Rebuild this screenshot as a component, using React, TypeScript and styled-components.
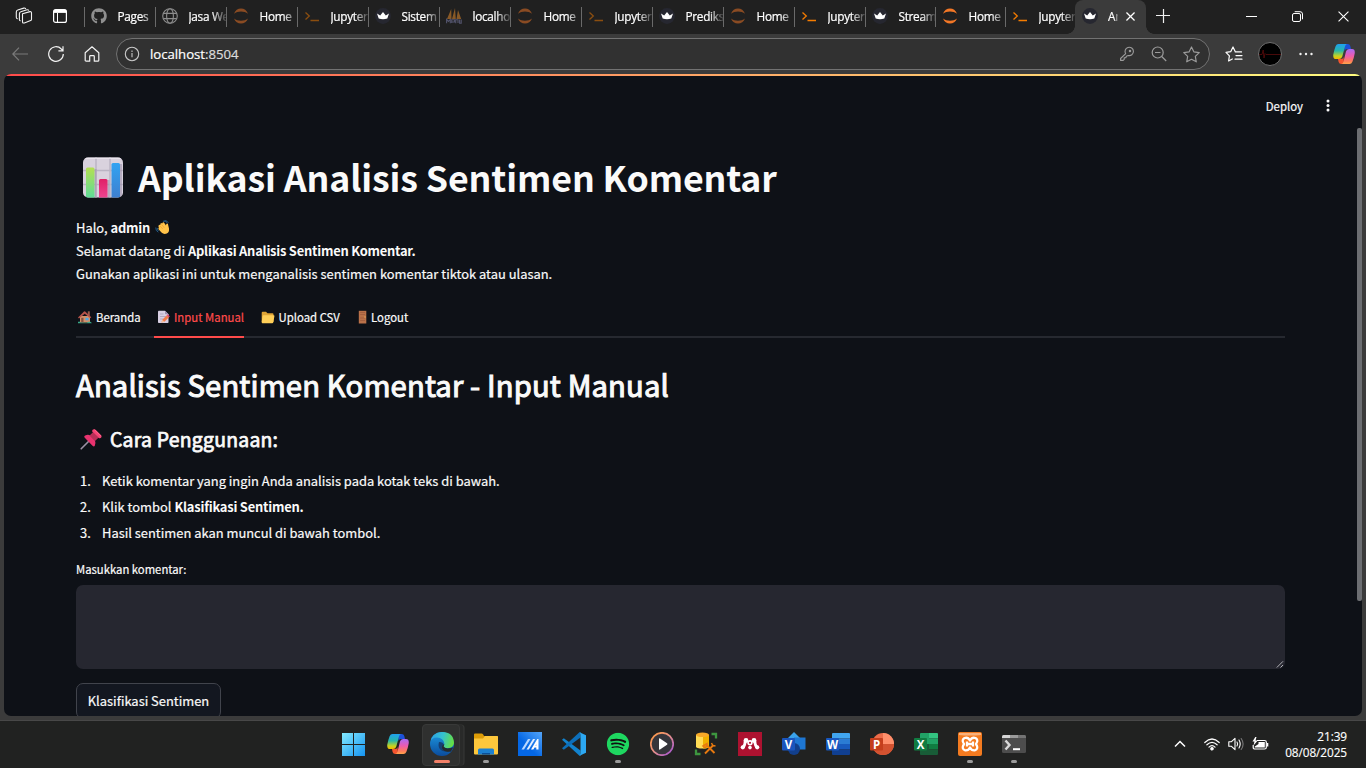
import React from "react";
import styled, { createGlobalStyle } from "styled-components";
import { FaGithub, FaSpotify } from "react-icons/fa";

const ui = `"Open Sans", "Noto Sans", sans-serif`;
const source = `"Noto Sans CJK SC", "Noto Sans", sans-serif`;

const GlobalStyle = createGlobalStyle`
  * { box-sizing: border-box; }
  body { margin: 0; background: #3b3b3b; overflow: hidden; }
  svg { display: block; flex: none; }
`;

/* ---------- browser chrome ---------- */

const Screen = styled.div`
  width: 1366px;
  height: 768px;
  display: flex;
  flex-direction: column;
  overflow: hidden;
  background: #3b3b3b;
  font-family: ${ui};
  color: #fff;
`;

const TabStrip = styled.div`
  height: 34px;
  flex: none;
  display: flex;
  background: #202020;
`;

const StripTools = styled.div`
  width: 84px;
  display: flex;
  align-items: center;
  padding: 0 0 2px 15px;
  gap: 20px;
`;

const Tab = styled.div<{ $w: number }>`
  width: ${(p) => p.$w}px;
  height: 20px;
  margin-top: 7px;
  border-left: 1px solid #6a6a6a;
  display: flex;
  align-items: center;
  padding: 0 0 2px 6px;
  gap: 10.5px;
`;

const TabIcon = styled.span<{ $dim?: boolean }>`
  flex: none;
  width: 16px;
  height: 16px;
  opacity: ${(p) => (p.$dim ? 0.5 : 1)};
`;

const TabTitle = styled.span`
  flex: 1;
  min-width: 0;
  overflow: hidden;
  white-space: nowrap;
  font-size: 11.8px;
  line-height: 16px;
  letter-spacing: -0.3px;
  color: #fff;
  -webkit-text-stroke: 0.2px #fff;
  mask-image: linear-gradient(to right, #000 calc(100% - 14px), rgba(0, 0, 0, 0.15));
`;

const ActiveTab = styled.div`
  width: 71px;
  height: 34px;
  position: relative;
  background: #3b3b3b;
  border-radius: 8px 8px 0 0;
  display: flex;
  align-items: center;
  padding: 0 11px 2px 7px;

  &::before,
  &::after {
    content: "";
    position: absolute;
    bottom: 0;
    width: 8px;
    height: 8px;
  }
  &::before {
    left: -8px;
    background: radial-gradient(circle at 0 0, transparent 7.5px, #3b3b3b 8px);
  }
  &::after {
    right: -8px;
    background: radial-gradient(circle at 100% 0, transparent 7.5px, #3b3b3b 8px);
  }
`;

const ActiveTitle = styled(TabTitle)`
  flex: none;
  width: 10px;
  margin: 0 8px 0 10px;
  mask-image: linear-gradient(to right, #000 60%, rgba(0, 0, 0, 0.2));
`;

const NewTab = styled.div`
  padding: 9px 0 0 10px;
`;

const WindowButtons = styled.div`
  margin-left: auto;
  display: flex;
  align-items: center;
  gap: 35px;
  padding: 0 17px 1px 0;
`;

const Toolbar = styled.div`
  height: 40px;
  flex: none;
  display: flex;
  align-items: center;
  padding: 0 11px 0 12px;
`;

const NavButtons = styled.div`
  display: flex;
  align-items: center;
  width: 104px;
  gap: 20px;
`;

const AddressBar = styled.div`
  width: 1094px;
  height: 32px;
  border: 1px solid #727272;
  border-radius: 16px;
  background: #313131;
  display: flex;
  align-items: center;
  padding: 0 9px 0 7px;
`;

const Url = styled.span`
  flex: 1;
  margin-left: 10px;
  font-size: 13.2px;
  line-height: 18px;
  letter-spacing: -0.03px;
  color: #fff;
  -webkit-text-stroke: 0.2px currentColor;

  span { color: #dcdcdc; }
`;

const AddressActions = styled.div`
  display: flex;
  align-items: center;
  gap: 16px;
`;

const ToolbarActions = styled.div`
  flex: 1;
  display: flex;
  align-items: center;
  justify-content: flex-end;
`;

const Avatar = styled.div`
  width: 24px;
  height: 24px;
  margin: 0 17px 0 15px;
  border-radius: 50%;
  border: 1px solid #707070;
  background: #000;
  display: flex;
  align-items: center;
  overflow: hidden;
`;

const CopilotSlot = styled.span`
  margin-left: 20px;
`;

/* ---------- page ---------- */

const Page = styled.div`
  position: relative;
  width: 1358px;
  height: 642px;
  flex: none;
  margin: 0 4px;
  border-radius: 7px;
  overflow: hidden;
  background: #0e1117;
  color: #fafafa;
  font-family: ${source};
  -webkit-text-stroke: 0.2px currentColor;
`;

const Rainbow = styled.div`
  height: 2px;
  background: linear-gradient(to right, #ff4b4b, #fffd80);
`;

const Header = styled.div`
  height: 76px;
  display: flex;
  justify-content: flex-end;
  align-items: flex-start;
  padding: 20px 32px 0 0;
  gap: 23px;
  font-size: 11.4px;
  line-height: 20px;
`;

const KebabSlot = styled.span`
  padding: 3px 0;
`;

const Content = styled.div`
  width: 1209px;
  margin-left: 72px;
`;

const Title = styled.h1`
  margin: 0;
  height: 48px;
  display: flex;
  align-items: center;
  gap: 15px;
  padding: 2px 0 0 6px;
  font-size: 35.7px;
  line-height: 48px;
  font-weight: 700;
  letter-spacing: -0.12px;
  white-space: nowrap;
  -webkit-text-stroke: 0;
`;

const Intro = styled.div`
  margin-top: 16px;
  font-size: 12.92px;
  line-height: 23px;
`;

const Strong = styled.b`
  font-weight: 700;
  letter-spacing: -0.22px;
  -webkit-text-stroke: 0;
`;

const Line = styled.div`
  display: flex;
  align-items: center;
  white-space: pre;
  height: 23px;
`;

const WaveSlot = styled.span`
  margin-left: 5px;
`;

const TabList = styled.div`
  margin-top: 14px;
  height: 39px;
  display: flex;
  gap: 14px;
  border-bottom: 2px solid #262930;
`;

const PageTab = styled.div<{ $active?: boolean; $w: number; $inset?: number }>`
  height: 39px;
  width: ${(p) => p.$w}px;
  display: flex;
  align-items: center;
  gap: 4px;
  padding: 0 0 1px ${(p) => p.$inset ?? 2}px;
  border-bottom: 2px solid ${(p) => (p.$active ? "#ff4b4b" : "transparent")};
  color: ${(p) => (p.$active ? "#ff4b4b" : "#fafafa")};
  font-size: 11.36px;
  white-space: nowrap;
`;

const Subtitle = styled.h2`
  margin: 26px 0 0;
  font-size: 29.2px;
  line-height: 40px;
  font-weight: 400;
  letter-spacing: 0.15px;
  -webkit-text-stroke: 1.05px currentColor;
`;

const Section = styled.h3`
  margin: 20px 0 0;
  padding: 0 0 0 4px;
  height: 29px;
  display: flex;
  align-items: center;
  gap: 7px;
  font-size: 19.4px;
  line-height: 29px;
  font-weight: 400;
  letter-spacing: 0.24px;
  -webkit-text-stroke: 0.75px currentColor;
`;

const PinSlot = styled.span`
  padding-top: 1px;
`;

const Steps = styled.ol`
  margin: 15px 0 0;
  padding: 0;
  list-style: none;
  font-size: 12.92px;
  line-height: 26px;
`;

const Step = styled.li`
  display: flex;
  height: 26px;
  white-space: pre;
  padding-left: 4px;
`;

const StepNumber = styled.span`
  width: 22px;
`;

const Label = styled.div`
  margin-top: 13px;
  height: 26px;
  font-size: 11.3px;
  line-height: 20px;
`;

const TextBox = styled.div`
  height: 84px;
  border-radius: 7px;
  background: #262730;
  display: flex;
  justify-content: flex-end;
  align-items: flex-end;
`;

const Button = styled.div`
  margin-top: 14px;
  width: 145px;
  height: 36px;
  border: 1px solid #41444c;
  border-radius: 7px;
  background: #131720;
  text-align: center;
  font-size: 12.92px;
  line-height: 34px;
`;

const ScrollThumb = styled.div`
  position: absolute;
  right: 0;
  top: 54px;
  width: 5px;
  height: 473px;
  border-radius: 2px;
  background: #6c6e72;
`;

/* ---------- taskbar ---------- */

const Taskbar = styled.div`
  height: 48px;
  margin-top: 4px;
  flex: none;
  border-top: 1px solid #484848;
  background: #212221;
  display: flex;
  align-items: center;
  padding-left: 332px;
`;

const TaskCell = styled.div<{ $active?: boolean }>`
  position: relative;
  width: 44px;
  height: 47px;
  display: flex;
  align-items: center;
  justify-content: center;
  padding-bottom: 1px;

  &::before {
    content: "";
    display: ${(p) => (p.$active ? "block" : "none")};
    position: absolute;
    left: 2px;
    top: 3px;
    width: 36px;
    height: 40px;
    border-radius: 4px;
    background: #2f302f;
    border: 1px solid #383938;
    box-shadow: 4px 0 0 -0.5px #292a29, 5px 0 0 -0.5px #383938;
  }
  svg { position: relative; }
`;

const Running = styled.span<{ $active?: boolean }>`
  position: absolute;
  bottom: 5px;
  left: ${(p) => (p.$active ? 14 : 19)}px;
  width: ${(p) => (p.$active ? 16 : 6)}px;
  height: 3px;
  border-radius: 2px;
  background: ${(p) => (p.$active ? "#f28068" : "#9b9b9b")};
`;

const Tray = styled.div`
  margin-left: auto;
  display: flex;
  align-items: center;
  padding: 0 19px 1px 0;
`;

const TraySlot = styled.span<{ $w: number }>`
  width: ${(p) => p.$w}px;
  display: flex;
  justify-content: center;
`;

const Clock = styled.div`
  width: 66px;
  margin-left: 1px;
  padding-bottom: 1px;
  text-align: right;
  font-size: 11.8px;
  line-height: 16px;
  letter-spacing: -0.08px;
  -webkit-text-stroke: 0.15px #fff;
`;

/* ---------- icons ---------- */

const WorkspacesIcon = () => (
  <svg width="18" height="18" viewBox="0 0 18 18" fill="none" stroke="#f2f2f2" strokeWidth="1.1" strokeLinejoin="round" strokeLinecap="round">
    <path d="M7.5 6.8 15 4.6Q16.5 4.4 16.5 6V12.3Q16.5 13.3 15.6 13.6L9.4 15.9Q7.5 16.5 7.5 14.8Z" />
    <path d="M5.2 13.8Q4.4 13.6 4.4 12.4V6.8Q4.4 5.2 5.8 4.8L12 2.8Q13 2.6 13.6 3.2" />
    <path d="M2.3 11.8Q1.3 11.4 1.3 10.2V5Q1.3 3.4 2.7 3L8.8 1.1Q10 .8 10.6 1.6" />
  </svg>
);

const VerticalTabsIcon = () => (
  <svg width="14" height="14" viewBox="0 0 14 14" fill="none" stroke="#fff">
    <rect x=".6" y=".6" width="12.8" height="12.8" rx="2" strokeWidth="1.2" />
    <path d="M1 2.4H13" strokeWidth="3" />
    <path d="M4.5 4V13" />
  </svg>
);

const GlobeIcon = () => (
  <svg width="16" height="16" viewBox="0 0 16 16" fill="none" stroke="#8c8c8c" strokeWidth="1.1">
    <circle cx="8" cy="8" r="7.3" />
    <ellipse cx="8" cy="8" rx="3.4" ry="7.3" />
    <path d="M1.3 5.4H14.7M1.3 10.6H14.7" />
  </svg>
);

const JupyterIcon = () => (
  <svg width="16" height="16" viewBox="0 0 16 16" fill="#f37726">
    <path d="M1 5.7C2.2 2.4 4.9.6 8 .6s5.8 1.8 7 5.1C13 4.200 10.800 3.500 8 3.500S3 4.200 1 5.700Z" />
    <path d="M1 10.500C2.200 13.800 4.900 15.600 8 15.600s5.800-1.800 7-5.100C13 12 10.800 12.700 8 12.700S3 12 1 10.500Z" />
  </svg>
);

const PromptIcon = () => (
  <svg width="16" height="16" viewBox="0 0 16 16" fill="none" stroke="#f57c00" strokeWidth="1.3">
    <path d="M1.500 4.500 5.300 8 1.500 11.500M6.500 12.500H15" />
  </svg>
);

const CrownIcon = () => (
  <svg width="16" height="16" viewBox="0 0 16 16">
    <circle cx="8" cy="8" r="7.900" fill="#262730" />
    <path d="M2 5.600 5.200 7.600 8 4 10.800 7.600 14 5.600 12.300 10.600Q8 11.800 3.700 10.600Z" fill="#fff" />
  </svg>
);

const SailIcon = () => (
  <svg width="16" height="16" viewBox="0 0 16 16">
    <path d="M5.200 1 1 11H5.500Z M9 0 6 11H9.800Z M12 2 10.500 11H15.200Z" fill="#f2932c" />
    <path d="M.6 15.200V11.500L2.500 13.500 4.300 11.500V15.200M5.700 15V11.800H8.500V14H5.700M9.700 15.200V11.800H12V15M13.600 11.500V15.200H15.200V11.500" fill="none" stroke="#8587b8" strokeWidth="1.100" />
  </svg>
);

const CloseIcon = ({ size, w = 1.2 }: { size: number; w?: number }) => (
  <svg width={size} height={size} viewBox="0 0 10 10" stroke="#fff" strokeWidth={w}>
    <path d="M.5.5 9.500 9.500M9.500.5.5 9.500" />
  </svg>
);

const PlusIcon = () => (
  <svg width="14" height="14" viewBox="0 0 14 14" stroke="#f0f0f0" strokeWidth="1.200">
    <path d="M7.500 0V14M0 6.500H14" />
  </svg>
);

const BackIcon = () => (
  <svg width="16" height="14" viewBox="0 0 16 14" fill="none" stroke="#7a7a7a" strokeWidth="1.200">
    <path d="M7 .7.8 7 7 13.300M1 7H16" />
  </svg>
);

const ReloadIcon = () => (
  <svg width="16" height="16" viewBox="0 0 16 16" fill="none" stroke="#f2f2f2" strokeWidth="1.200">
    <path d="M15.300 8A7.300 7.300 0 1 1 13.300 3L15 4.700M15 .3V4.900H10.400" />
  </svg>
);

const HomeIcon = () => (
  <svg width="16" height="16" viewBox="0 0 16 16" fill="none" stroke="#f2f2f2" strokeWidth="1.200" strokeLinejoin="round">
    <path d="M1.200 6.700 8 .8 14.800 6.700V14.200Q14.800 15.200 13.800 15.200H10.300V10.500Q10.300 9.700 9.500 9.700H6.500Q5.700 9.700 5.700 10.500V15.200H2.200Q1.200 15.200 1.200 14.200Z" />
  </svg>
);

const InfoIcon = () => (
  <svg width="16" height="16" viewBox="0 0 16 16" fill="none" stroke="#c8c8c8" strokeWidth="1.100">
    <circle cx="8" cy="8" r="6.700" />
    <path d="M8 7V11.300M8 4.600V5.900" />
  </svg>
);

const KeyIcon = () => (
  <svg width="16" height="16" viewBox="0 0 16 16" fill="none" stroke="#9c9c9c" strokeWidth="1.100" strokeLinejoin="round">
    <path d="M6.700 7.700A4.200 4.200 0 1 1 9.200 9.500L7.400 10.200 6.800 11.800H5.200V13.400L4.200 14.400H1.600V12.500Z" />
    <circle cx="11" cy="5" r=".7" fill="#9c9c9c" />
  </svg>
);

const ZoomOutIcon = () => (
  <svg width="16" height="16" viewBox="0 0 16 16" fill="none" stroke="#9c9c9c" strokeWidth="1.200">
    <circle cx="6.700" cy="6.500" r="5.500" />
    <path d="M10.700 10.500 15.200 15M4 6.500H9.500" />
  </svg>
);

const StarIcon = () => (
  <svg width="17" height="17" viewBox="0 0 16 16" fill="none" stroke="#9c9c9c" strokeWidth="1.100" strokeLinejoin="round">
    <path d="M8 .9 10.200 5.500 15.300 6.200 11.600 9.800 12.500 14.900 8 12.500 3.500 14.900 4.400 9.800.7 6.200 5.800 5.500Z" />
  </svg>
);

const FavoritesIcon = () => (
  <svg width="18" height="16" viewBox="0 0 18 16" fill="none" stroke="#fff" strokeWidth="1.200" strokeLinejoin="round" strokeLinecap="round">
    <path d="M10.300 5.700 8 1 5.700 5.700 1 6.300 4.400 9.800 3.600 15 7.300 13M10.300 5.900H16.500M11 9.600H17M10 13.200H17" />
  </svg>
);

const PulseIcon = () => (
  <svg width="22" height="12" viewBox="0 0 22 12" fill="none" stroke="#5c0d0d" strokeWidth=".8">
    <path d="M0 6.500H3L4.200 2 5 10 6 5.500 7 6.500H22" />
  </svg>
);

const MoreIcon = () => (
  <svg width="14" height="4" viewBox="0 0 14 4" fill="#f2f2f2">
    <circle cx="1.500" cy="2" r="1.200" /><circle cx="7" cy="2" r="1.200" /><circle cx="12.500" cy="2" r="1.200" />
  </svg>
);

const CopilotIcon = ({ id, size = 22 }: { id: string; size?: number }) => (
  <svg width={size} height={size} viewBox="0 0 22 22">
    <defs>
      <linearGradient id={id + "a"} x1="0" y1="0" x2="0" y2="1">
        <stop offset="0" stopColor="#1fa0f0" /><stop offset=".45" stopColor="#28b7a8" /><stop offset=".8" stopColor="#c5d421" /><stop offset="1" stopColor="#f7b500" />
      </linearGradient>
      <linearGradient id={id + "b"} x1="0" y1="0" x2="0" y2="1">
        <stop offset="0" stopColor="#a96bf5" /><stop offset=".45" stopColor="#ec5bb0" /><stop offset=".8" stopColor="#ff7b5b" /><stop offset="1" stopColor="#ffa54b" />
      </linearGradient>
    </defs>
    <path d="M11 1H14.800Q16.800 1 17.300 3L18 6H14Q12 6 11.500 8Z" fill="#1c50d8" />
    <path d="M11 21H8.200Q6.200 21 5.600 19L5 16H8.500Q10 16 10.500 14Z" fill="#f4552f" />
    <path d="M5.500 1H14Q12.500 1.400 12 3.500L9.300 13.500Q8.600 16 6 16H3Q-.2 16 .3 11.500 1.300 6.500 2.600 3.200 3.500 1 5.500 1Z" fill={`url(#${id}a)`} />
    <path d="M16.500 21H8.500Q10 20.600 10.500 18.500L13 8.500Q13.700 6 16 6H19Q22.300 6 21.700 10.500 20.800 15.500 19.400 18.800 18.500 21 16.500 21Z" fill={`url(#${id}b)`} />
  </svg>
);

const MinimizeIcon = () => (
  <svg width="11" height="11" viewBox="0 0 11 11" stroke="#fff"><path d="M0 5.500H11" /></svg>
);

const RestoreIcon = () => (
  <svg width="11" height="11" viewBox="0 0 11 11" fill="none" stroke="#fff">
    <rect x=".5" y="2.500" width="8" height="8" rx="1.500" />
    <path d="M2.700.7H8Q10.500.7 10.500 3V8.300" />
  </svg>
);

const KebabIcon = () => (
  <svg width="4" height="13" viewBox="0 0 4 13" fill="#fafafa">
    <circle cx="2" cy="2" r="1.500" /><circle cx="2" cy="6.500" r="1.500" /><circle cx="2" cy="11" r="1.500" />
  </svg>
);

/* ---------- emoji ---------- */

const ChartEmoji = () => (
  <svg width="41" height="41" viewBox="-0.5 0 41 41">
    <defs>
      <linearGradient id="barG" x1="0" y1="0" x2="0" y2="1"><stop offset="0" stopColor="#b4e052" /><stop offset="1" stopColor="#5ddb98" /></linearGradient>
      <linearGradient id="barR" x1="0" y1="0" x2="0" y2="1"><stop offset="0" stopColor="#e01f67" /><stop offset="1" stopColor="#ee4590" /></linearGradient>
      <linearGradient id="barB" x1="0" y1="0" x2="0" y2="1"><stop offset="0" stopColor="#31a3f2" /><stop offset="1" stopColor="#3e7fcf" /></linearGradient>
      <clipPath id="chartClip"><rect x=".5" y=".5" width="40" height="40" rx="5" /></clipPath>
    </defs>
    <g clipPath="url(#chartClip)">
      <rect width="41" height="41" fill="#d9d2de" />
      <path d="M13.500 0V41M27.500 0V41M0 13.500H41M0 27.500H41" stroke="#bbb4c4" strokeWidth="1.500" />
      <path d="M0 1H41" stroke="#eeeaf1" strokeWidth="1.500" />
      <path d="M13 12V41M26 23V41M38.500 7V41" stroke="#9d93ac" strokeWidth="2" opacity=".6" />
      <path d="M3.500 41V12Q3.500 10.500 5 10.500H10.500Q12 10.500 12 12V41Z" fill="url(#barG)" />
      <path d="M16.500 41V23.500Q16.500 22 18 22H23.500Q25 22 25 23.500V41Z" fill="url(#barR)" />
      <path d="M29 41V7.500Q29 6 30.500 6H36Q37.500 6 37.500 7.500V41Z" fill="url(#barB)" />
    </g>
  </svg>
);

const WaveEmoji = () => (
  <svg width="15" height="15" viewBox="0 0 15 15">
    <path d="M8 1.200Q11 .6 12.300 3M9.500 .6Q12.500.7 13.300 2.800M.8 7.500Q.6 11 3.300 12.200M2.300 8Q2.200 9.800 3.500 11" fill="none" stroke="#235a86" strokeWidth="1" />
    <path d="M3.800 5.300Q4.400 4.300 5.200 5L5.500 3.500Q6.300 2.600 7.100 3.400L7.800 2.400Q8.800 1.800 9.300 2.900L11 5.500Q11 3.600 12.200 3.500 13.200 3.700 13.200 5.200L14 8.500Q14.500 12.300 11.800 13.600 8.800 14.800 6.500 12.600L3.500 9.200Q3 8.300 3.900 7.900L3.500 6.400Q3.300 5.700 3.800 5.300Z" fill="#ffc34a" />
    <path d="M5 6 7.800 9M6.700 4.600 9.300 7.800" stroke="#e79a2c" strokeWidth=".6" />
  </svg>
);

const HouseEmoji = () => (
  <svg width="14" height="14" viewBox="0 0 14 14">
    <path d="M2 6H12V12.500H2Z" fill="#d3916a" />
    <path d="M9.800 1.300H11.800V6H9.800Z" fill="#9a5b4c" />
    <path d="M0 7.500 6 1.500Q6.500 1 7.200 1.500L13.300 7.300 12.300 8.200 6.700 3.800 1 8.500Z" fill="#b5524a" />
    <path d="M3.200 7.800H5.500V12.500H3.200Z" fill="#875241" />
    <path d="M7.500 7.800H10.500V10.300H7.500Z" fill="#4ba8e6" />
    <path d="M0 13.200V12Q1.200 10.800 2.500 12.500L9 12.700Q10 11.200 11.300 11.800 13.500 11.200 13.700 13.200Z" fill="#39a889" />
  </svg>
);

const MemoEmoji = () => (
  <svg width="13" height="14" viewBox="0 0 13 14">
    <path d="M1 1.500Q1 .8 1.800.8H8L11.500 4.300V12.200Q11.500 13 10.700 13H1.800Q1 13 1 12.200Z" fill="#d8cfe3" />
    <path d="M8 .8 11.500 4.300H8.700Q8 4.300 8 3.500Z" fill="#9c8fb0" />
    <path d="M3 4H6.500M3 6.500H9M3 9H6.500" stroke="#a99eb8" strokeWidth=".8" />
    <path d="M4.500 12.500 5.300 9.700 9.800 5.200 12 7.300 7.400 11.700Z" fill="#f47b4b" />
    <path d="M9.800 5.200 10.800 4.300 12.900 6.400 12 7.300Z" fill="#de3d72" />
    <path d="M4.500 12.500 5.300 9.700 7.400 11.700Z" fill="#f1c49f" />
  </svg>
);

const FolderEmoji = () => (
  <svg width="14" height="13" viewBox="0 0 14 13">
    <path d="M.7 1.800Q.7.800 1.700.8H5L6.500 2.300H11.500Q12.500 2.300 12.500 3.300V11H.7Z" fill="#e0a536" />
    <path d="M2.500 4.300H12.600Q13.700 4.300 13.400 5.300L12.300 11.300Q12.100 12.200 11.200 12.200H1.500Q.7 12.200.7 11.200L1.500 5.200Q1.700 4.300 2.500 4.300Z" fill="#ffcf58" />
  </svg>
);

const DoorEmoji = () => (
  <svg width="9" height="14" viewBox="0 0 9 14">
    <rect x=".8" y=".8" width="7.500" height="12.700" fill="#b97149" />
    <path d="M2.200 2.500H7M2.200 4.500H7M2.200 8H7M2.200 10.500H7" stroke="#a5603f" strokeWidth="1.100" />
    <circle cx="7" cy="7" r=".7" fill="#f3b35a" />
  </svg>
);

const PinEmoji = () => (
  <svg width="23" height="23" viewBox="0 0 23 23">
    <path d="M9.500 12.500 1.200 20.800" stroke="#9b90a5" strokeWidth="1.600" strokeLinecap="round" />
    <path d="M5 10Q3.400 8.400 5.200 7.500 8 6.200 10 7.300L15 12.500Q16 15 14.800 17.700 14 19.300 12.500 17.700Z" fill="#e8336f" />
    <path d="M9.500 7.500 13 4.300 18.500 9.700 15 13Z" fill="#b82f58" />
    <path d="M12.300 3.800Q11.800 1.400 14 1.200 15 1.100 15.600 1.700L21.200 7.300Q21.900 8.200 21.400 9.300 20.700 10.700 18.700 10.100Z" fill="#f54275" />
    <path d="M14.500 1.800 21 8.200" stroke="#ff6c8f" strokeWidth="1" />
  </svg>
);

const ResizeGrip = () => (
  <svg width="9" height="9" viewBox="0 0 9 9" stroke="#bfbfc4" strokeWidth=".9">
    <path d="M.8 7.500 7 1.300M4.500 7.500 7 5" />
  </svg>
);

/* ---------- taskbar icons ---------- */

const WindowsIcon = () => (
  <svg width="24" height="24" viewBox="0 0 24 24">
    <defs><linearGradient id="win" x1="0" y1="0" x2="1" y2="1"><stop offset="0" stopColor="#83eaff" /><stop offset="1" stopColor="#1593f0" /></linearGradient></defs>
    <path d="M0 1H11V12H0ZM12 1H23V12H12ZM0 13H11V24H0ZM12 13H23V24H12Z" fill="url(#win)" />
  </svg>
);

const EdgeIcon = () => (
  <svg width="24" height="24" viewBox="0 0 24 24">
    <defs>
      <linearGradient id="edgeTop" x1="0" y1=".3" x2="1" y2=".5"><stop offset="0" stopColor="#2b9fe4" /><stop offset=".5" stopColor="#35c1cf" /><stop offset="1" stopColor="#66e03e" /></linearGradient>
      <linearGradient id="edgeLow" x1="0" y1="0" x2="0" y2="1"><stop offset="0" stopColor="#1e9ae2" /><stop offset="1" stopColor="#0b4c9c" /></linearGradient>
    </defs>
    <circle cx="12" cy="12" r="12" fill="url(#edgeLow)" />
    <path d="M9 10Q13.600 10 13.600 13 13.400 15.500 16 16.300 20 17.400 23.500 14.500 23.200 17.500 20.800 20 18.500 19.400 15 19.500 9.200 18.800 8.600 14 8.400 11.800 9 10Z" fill="#153f73" />
    <path d="M.1 11Q1 5.500 7 5.500 13.500 6 14.300 11.500 14.200 13.500 13.400 14.300 14.200 16.200 17.500 16.200 23.500 15.800 24 11 23.500 0 12 0 1.500.4.1 11Z" fill="url(#edgeTop)" />
    <path d="M14.300 12Q14.200 13.500 13.400 14.300 14.200 16.200 17.500 16.500L22.600 16 20.800 19.300Q15 21 12.200 16.500 11.500 13.500 14.300 12Z" fill="#252a2b" />
  </svg>
);

const ExplorerIcon = () => (
  <svg width="24" height="24" viewBox="0 0 24 24">
    <path d="M0 2.500Q0 1.500 1 1.500H7.500Q8.500 1.500 9.200 2.500L10 4H23Q24 4 24 5V10H0Z" fill="#dd9c07" />
    <path d="M0 6.500H9L11 4H23Q24 4 24 5V21.500Q24 22.500 23 22.500H1Q0 22.500 0 21.500Z" fill="#fdc73c" />
    <path d="M4 22.500V18Q4 16.500 5.500 16.500H18.500Q20 16.500 20 18V22.500Z" fill="#1c80d0" />
    <path d="M8 22.500V21H16V22.500Z" fill="#0b4f96" />
  </svg>
);

const MyAsusIcon = () => (
  <svg width="24" height="24" viewBox="0 0 24 24">
    <defs><linearGradient id="asus" x1="0" y1="1" x2="1" y2="0"><stop offset=".4" stopColor="#0467e5" /><stop offset="1" stopColor="#55a5f8" /></linearGradient></defs>
    <rect width="24" height="24" fill="url(#asus)" />
    <path d="M3.500 17.500 10 7H12.500L6 17.500Z" fill="#b9d8ff" />
    <path d="M8.500 17.500 15 7H17.200L10.800 17.500Z" fill="#e4f0ff" />
    <path d="M13 17.500 19.300 7H20.500V17.500H18.300V15.500H16.500L15.300 17.500ZM17.500 13.700H18.300V12.300Z" fill="#fff" fillRule="evenodd" />
  </svg>
);

const CodeIcon = () => (
  <svg width="24" height="24" viewBox="0 0 24 24">
    <path d="M0 7.800 1.800 6.300 18.500 18.500V24L17.200 23.500Z" fill="#1283ce" />
    <path d="M0 16.200 1.800 17.700 18.500 5.500V0L17.200.5Z" fill="#0d6fba" />
    <path d="M17.500.3 24 3.200V20.800L17.500 23.800Q18.500 22.800 18.500 21V3Q18.500 1.200 17.500.3Z" fill="#2ca8f2" />
  </svg>
);

const MediaIcon = () => (
  <svg width="24" height="24" viewBox="0 0 24 24">
    <defs><linearGradient id="media" x1="0" y1="0" x2="1" y2="1"><stop offset="0" stopColor="#ff9a3c" /><stop offset=".5" stopColor="#e58f8b" /><stop offset="1" stopColor="#9b4ddb" /></linearGradient></defs>
    <circle cx="12" cy="12" r="11.200" fill="#35353b" stroke="url(#media)" strokeWidth="1.700" />
    <path d="M9 7Q9 6 10 6.500L17 11.200Q18 12 17 12.800L10 17.500Q9 18 9 17Z" fill="#fff" />
  </svg>
);

const DbToolIcon = () => (
  <svg width="24" height="24" viewBox="0 0 24 24">
    <path d="M17.500 2H22V6.500M2 17.500V22H6.500" fill="none" stroke="#3d963f" strokeWidth="2.300" />
    <path d="M2 3V14.500Q2 16.500 8.500 16.500T15 14.500V3Z" fill="#ffdc55" />
    <path d="M9 3V16.500Q15 16.300 15 14.500V3Z" fill="#f0b000" />
    <ellipse cx="8.500" cy="2.800" rx="6.500" ry="2.300" fill="#f7a928" />
    <path d="M11 21.500 19.500 13M12 12.500 20.500 21" stroke="#e8790f" strokeWidth="1.900" />
    <path d="M9 14 13 11.500V14L11 15.500ZM17.500 11 18.800 13.500 21.500 14" fill="none" stroke="#e8790f" strokeWidth="1.500" />
  </svg>
);

const MendeleyIcon = () => (
  <svg width="24" height="24" viewBox="0 0 24 24">
    <rect width="24" height="24" fill="#ad1230" />
    <g fill="none" stroke="#fff" strokeWidth="2.800" strokeLinecap="round">
      <path d="M5 15.200Q7 13.800 7.200 9M19 15.200Q17 13.800 16.800 9" />
    </g>
    <g fill="#fff">
      <circle cx="8" cy="8.500" r="2.400" /><circle cx="16" cy="8.500" r="2.400" /><circle cx="12" cy="10.800" r="2.700" />
      <circle cx="4.800" cy="15.300" r="2.100" /><circle cx="19.200" cy="15.300" r="2.100" /><circle cx="12" cy="15.600" r="1.800" />
    </g>
    <circle cx="12" cy="10.800" r="1.100" fill="#ad1230" />
  </svg>
);

const Letter = ({ c }: { c: string }) => (
  <text x="6.500" y="16.500" textAnchor="middle" fontFamily="Open Sans, sans-serif" fontWeight="700" fontSize="11.500" fill="#fff">{c}</text>
);

const VisioIcon = () => (
  <svg width="24" height="24" viewBox="0 0 24 24">
    <path d="M12 0 19 7 12 14 5 7Z" fill="#3aa2ea" />
    <rect x="12" y="5.500" width="11.500" height="12" fill="#1e77d3" />
    <circle cx="12" cy="17" r="6" fill="#123f8c" />
    <rect x="0" y="6" width="13" height="12.500" rx="1" fill="#1a55bd" />
    <Letter c="V" />
  </svg>
);

const WordIcon = () => (
  <svg width="24" height="24" viewBox="0 0 24 24">
    <path d="M6 2Q6 1 7 1H23Q24 1 24 2V6.500H6Z" fill="#41a5ee" />
    <path d="M6 6.500H24V12H6Z" fill="#2b7cd3" /><path d="M6 12H24V17.500H6Z" fill="#185abd" />
    <path d="M6 17.500H24V22Q24 23 23 23H7Q6 23 6 22Z" fill="#103f91" />
    <rect x="0" y="6" width="13" height="12.500" rx="1" fill="#1858c0" />
    <Letter c="W" />
  </svg>
);

const PowerPointIcon = () => (
  <svg width="24" height="24" viewBox="0 0 24 24">
    <circle cx="13" cy="12" r="11" fill="#ec6c4a" />
    <path d="M13 1A11 11 0 0 1 24 12H13Z" fill="#ff8f6b" />
    <path d="M2 12H24A11 11 0 0 1 2 12Z" fill="#d35230" />
    <rect x="0" y="6" width="13" height="12.500" rx="1" fill="#c43e1c" />
    <Letter c="P" />
  </svg>
);

const ExcelIcon = () => (
  <svg width="24" height="24" viewBox="0 0 24 24">
    <path d="M6 2Q6 1 7 1H15V12H6Z" fill="#21a366" /><path d="M15 1H23Q24 1 24 2V6.500H15Z" fill="#33c481" />
    <path d="M15 6.500H24V12H15Z" fill="#21a366" /><path d="M15 12H24V17.500H15Z" fill="#107c41" />
    <path d="M6 12H15V17.500H24V22Q24 23 23 23H7Q6 23 6 22Z" fill="#185c37" />
    <rect x="0" y="6" width="13" height="12.500" rx="1" fill="#107c41" />
    <Letter c="X" />
  </svg>
);

const XamppIcon = () => (
  <svg width="24" height="24" viewBox="0 0 24 24">
    <rect width="24" height="24" rx="2" fill="#f47b20" />
    <path d="M1 1H23V3Q12 4 1 3Z" fill="#f9b27c" />
    <path d="M12 8.500Q10 4.800 6.500 6 3.500 7.800 5.500 11 6.500 12 5.200 13.500 3.700 17 7 18.300 10.500 18.800 12 15.500 13.500 18.800 17 18.300 20.300 17 18.800 13.500 17.500 12 18.500 11 20.500 7.800 17.500 6 14 4.800 12 8.500ZM9 12H15M9 9.500V14.500M15 9.500V14.500" fill="none" stroke="#fff" strokeWidth="2.300" strokeLinejoin="round" />
  </svg>
);

const TerminalIcon = () => (
  <svg width="24" height="24" viewBox="0 0 24 24">
    <rect y="3" width="24" height="18" rx="1.500" fill="#4d4d4d" />
    <path d="M0 6V4.500Q0 3 1.500 3H8V6Z" fill="#d5d5d5" /><path d="M8 3H16V6H8Z" fill="#9a9a9a" /><path d="M16 3H22.500Q24 3 24 4.500V6H16Z" fill="#747474" />
    <path d="M3.500 8.500 7.500 13 3.500 17.500" fill="none" stroke="#d9d9d9" strokeWidth="2.400" />
    <path d="M11 17.200H18" stroke="#fff" strokeWidth="2" />
  </svg>
);

const ChevronUp = () => (
  <svg width="12" height="8" viewBox="0 0 12 8" fill="none" stroke="#fff" strokeWidth="1.500"><path d="M1 6.500 6 1.500 11 6.500" /></svg>
);

const WifiIcon = () => (
  <svg width="16" height="13" viewBox="0 0 16 13" fill="none" stroke="#fff" strokeWidth="1.200" strokeLinecap="round">
    <path d="M.8 4.500Q8-2.500 15.200 4.500M2.900 6.800Q8 2 13.100 6.800M5 9.100Q8 6.300 11 9.100" />
    <circle cx="8" cy="10.800" r="1.200" fill="#fff" />
  </svg>
);

const VolumeIcon = () => (
  <svg width="17" height="14" viewBox="0 0 17 14" fill="none" stroke="#fff" strokeWidth="1.100" strokeLinecap="round" strokeLinejoin="round">
    <path d="M.8 4.700H3.500L7 1.300V12.700L3.500 9.300H.8ZM9 5Q10.200 7 9 9M11 3Q13.400 7 11 11" />
    <path d="M13.200 1.500Q17 7 13.200 12.500" stroke="#777" />
  </svg>
);

const BatteryIcon = () => (
  <svg width="17" height="14" viewBox="0 0 17 14">
    <path d="M5 3.500H12.500Q14.300 3.500 14.300 5V10.500Q14.300 12 12.500 12H3Q1.200 12 1.200 10.500V8" fill="none" stroke="#fff" strokeWidth="1.200" />
    <path d="M6.500 5H12.800V10.500H2.800V9.500L6.500 7Z" fill="#fff" /><path d="M15 6H16.300V9.500H15Z" fill="#fff" />
    <path d="M3.300 0 .5 4.500H2.500L1.500 8.500 5.800 3.500H3.500L4.500 0Z" fill="#fff" />
  </svg>
);

const GithubTabIcon = () => <FaGithub size={16} color="#8f8f8f" />;

const SpotifyIcon = () => (
  <svg width="24" height="24" viewBox="0 0 24 24">
    <circle cx="12" cy="12" r="10" fill="#111" />
    <FaSpotify size={23} x={0.5} y={0.5} color="#1ed760" />
  </svg>
);

/* ---------- data ---------- */

const tabs = [
  { title: "Pages", icon: GithubTabIcon },
  { title: "Jasa We", icon: GlobeIcon },
  { title: "Home", icon: JupyterIcon, dim: true },
  { title: "Jupyter", icon: PromptIcon, dim: true },
  { title: "Sistem", icon: CrownIcon },
  { title: "localho", icon: SailIcon, dim: true },
  { title: "Home", icon: JupyterIcon, dim: true },
  { title: "Jupyter", icon: PromptIcon, dim: true },
  { title: "Prediks", icon: CrownIcon },
  { title: "Home", icon: JupyterIcon, dim: true },
  { title: "Jupyter", icon: PromptIcon },
  { title: "Stream", icon: CrownIcon, w: 70 },
  { title: "Home", icon: JupyterIcon, w: 70 },
  { title: "Jupyter", icon: PromptIcon, w: 70 },
];

const apps: { icon: React.ReactNode; running?: boolean; active?: boolean }[] = [
  { icon: <WindowsIcon /> },
  { icon: <CopilotIcon id="task" /> },
  { icon: <EdgeIcon />, active: true },
  { icon: <ExplorerIcon />, running: true },
  { icon: <MyAsusIcon /> },
  { icon: <CodeIcon /> },
  { icon: <SpotifyIcon />, running: true },
  { icon: <MediaIcon /> },
  { icon: <DbToolIcon /> },
  { icon: <MendeleyIcon /> },
  { icon: <VisioIcon /> },
  { icon: <WordIcon /> },
  { icon: <PowerPointIcon /> },
  { icon: <ExcelIcon /> },
  { icon: <XamppIcon />, running: true },
  { icon: <TerminalIcon />, running: true },
];

export default function App() {
  return (
    <Screen>
      <GlobalStyle />
      <TabStrip>
        <StripTools><WorkspacesIcon /><VerticalTabsIcon /></StripTools>
        {tabs.map(({ title, icon: Icon, dim, w }, i) => (
          <Tab key={i} $w={w ?? 71}>
            <TabIcon $dim={dim}><Icon /></TabIcon>
            <TabTitle>{title}</TabTitle>
          </Tab>
        ))}
        <ActiveTab>
          <TabIcon><CrownIcon /></TabIcon>
          <ActiveTitle>An</ActiveTitle>
          <CloseIcon size={9} w={1.400} />
        </ActiveTab>
        <NewTab><PlusIcon /></NewTab>
        <WindowButtons><MinimizeIcon /><RestoreIcon /><CloseIcon size={11} w={1} /></WindowButtons>
      </TabStrip>

      <Toolbar>
        <NavButtons><BackIcon /><ReloadIcon /><HomeIcon /></NavButtons>
        <AddressBar>
          <InfoIcon />
          <Url>localhost<span>:8504</span></Url>
          <AddressActions><KeyIcon /><ZoomOutIcon /><StarIcon /></AddressActions>
        </AddressBar>
        <ToolbarActions>
          <FavoritesIcon />
          <Avatar><PulseIcon /></Avatar>
          <MoreIcon />
          <CopilotSlot><CopilotIcon id="bar" /></CopilotSlot>
        </ToolbarActions>
      </Toolbar>

      <Page>
        <Rainbow />
        <Header>
          <span>Deploy</span>
          <KebabSlot><KebabIcon /></KebabSlot>
        </Header>
        <Content>
          <Title><ChartEmoji /><span>Aplikasi Analisis Sentimen Komentar</span></Title>
          <Intro>
            <Line>Halo, <Strong>admin</Strong><WaveSlot><WaveEmoji /></WaveSlot></Line>
            <Line>Selamat datang di <Strong>Aplikasi Analisis Sentimen Komentar.</Strong></Line>
            <Line>Gunakan aplikasi ini untuk menganalisis sentimen komentar tiktok atau ulasan.</Line>
          </Intro>
          <TabList>
            <PageTab $w={64}><HouseEmoji />Beranda</PageTab>
            <PageTab $w={90} $inset={3} $active><MemoEmoji />Input Manual</PageTab>
            <PageTab $w={82} $inset={2.5}><FolderEmoji />Upload CSV</PageTab>
            <PageTab $w={56} $inset={4}><DoorEmoji />Logout</PageTab>
          </TabList>
          <Subtitle>Analisis Sentimen Komentar - Input Manual</Subtitle>
          <Section><PinSlot><PinEmoji /></PinSlot><span>Cara Penggunaan:</span></Section>
          <Steps>
            <Step><StepNumber>1.</StepNumber>Ketik komentar yang ingin Anda analisis pada kotak teks di bawah.</Step>
            <Step><StepNumber>2.</StepNumber>Klik tombol <Strong>Klasifikasi Sentimen.</Strong></Step>
            <Step><StepNumber>3.</StepNumber>Hasil sentimen akan muncul di bawah tombol.</Step>
          </Steps>
          <Label>Masukkan komentar:</Label>
          <TextBox><ResizeGrip /></TextBox>
          <Button>Klasifikasi Sentimen</Button>
        </Content>
        <ScrollThumb />
      </Page>

      <Taskbar>
        {apps.map((app, i) => (
          <TaskCell key={i} $active={app.active}>
            {app.icon}
            {(app.running || app.active) && <Running $active={app.active} />}
          </TaskCell>
        ))}
        <Tray>
          <TraySlot $w={24}><ChevronUp /></TraySlot>
          <TraySlot $w={40}><WifiIcon /></TraySlot>
          <TraySlot $w={8}><VolumeIcon /></TraySlot>
          <TraySlot $w={40}><BatteryIcon /></TraySlot>
          <Clock>21:39<br />08/08/2025</Clock>
        </Tray>
      </Taskbar>
    </Screen>
  );
}
